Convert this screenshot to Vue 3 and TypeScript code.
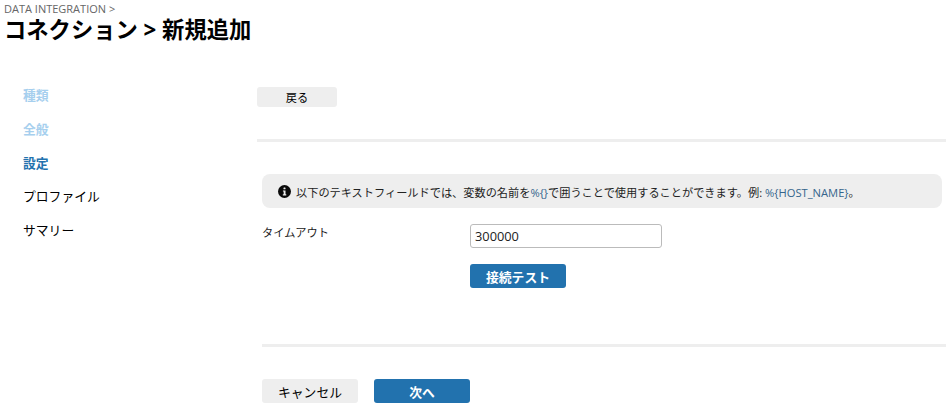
<script setup lang="ts">
const steps = [
  { label: '種類', state: 'done' },
  { label: '全般', state: 'done' },
  { label: '設定', state: 'active' },
  { label: 'プロファイル', state: '' },
  { label: 'サマリー', state: '' },
]
</script>

<template>
  <div class="page">
    <header class="page-header">
      <div class="crumb">DATA INTEGRATION &gt;</div>
      <h1>コネクション &gt; 新規追加</h1>
    </header>
    <div class="layout">
      <nav class="steps">
        <div v-for="s in steps" :key="s.label" class="step" :class="s.state">{{ s.label }}</div>
      </nav>
      <main class="content">
        <div class="back-row">
          <button class="btn btn-back">戻る</button>
        </div>
        <div class="rule"></div>
        <div class="form-area">
          <div class="notice">
            <svg class="info" width="13" height="13" viewBox="0 0 14 14">
              <circle cx="7" cy="7" r="7" fill="#0a0a0a" />
              <rect x="5.9" y="2.6" width="2.2" height="2.1" rx="0.5" fill="#eee" />
              <path d="M5.3 5.9h2.8v4.1h0.8v1.2H5.2V10h0.9V7.1h-0.8z" fill="#eee" />
            </svg>
            <span>以下のテキストフィールドでは、変数の名前を<span class="var">%{}</span>で囲うことで使用することができます。例: <span class="var">%{HOST_NAME}</span>。</span>
          </div>
          <div class="field">
            <label class="field-label">タイムアウト</label>
            <div class="field-body">
              <input class="text-input" type="text" value="300000" />
              <button class="btn btn-primary btn-test">接続テスト</button>
            </div>
          </div>
          <div class="rule bottom-rule"></div>
          <div class="actions">
            <button class="btn btn-cancel">キャンセル</button>
            <button class="btn btn-primary btn-next">次へ</button>
          </div>
        </div>
      </main>
    </div>
  </div>
</template>

<style>
html,
body {
  margin: 0;
  background: #fff;
  overflow: hidden;
}
</style>

<style scoped>
.page {
  width: 946px;
  height: 410px;
  overflow: hidden;
  font-family: "Open Sans", "Noto Sans CJK JP", sans-serif;
  color: #000;
}
.page-header {
  padding: 2px 0 0 4px;
}
.crumb {
  font-size: 11px;
  line-height: 13px;
  color: #666;
}
h1 {
  margin: 0;
  font-size: 22.3px;
  line-height: 30px;
  font-weight: 700;
}
.layout {
  display: flex;
  margin-top: 34px;
}
.steps {
  width: 257px;
  flex: none;
  padding: 4.3px 0 0 23px;
  box-sizing: border-box;
}
.step {
  height: 33.7px;
  line-height: 24px;
  font-size: 12.8px;
}
.step.done {
  color: #a6cfee;
  font-weight: 700;
}
.step.active {
  color: #2272ae;
  font-weight: 700;
}
.content {
  flex: 1;
  min-width: 0;
  padding-top: 6px;
}
.back-row {
  height: 52px;
}
.btn {
  display: block;
  border: 0;
  padding: 0;
  border-radius: 3px;
  font-family: inherit;
  box-sizing: border-box;
}
.btn-back {
  margin-top: 2px;
  width: 80px;
  height: 20px;
  background: #eee;
  font-size: 11.2px;
  color: #000;
}
.rule {
  height: 3px;
  background: #eee;
}
.form-area {
  padding: 32px 0 0 5px;
}
.notice {
  width: 680px;
  height: 34px;
  box-sizing: border-box;
  display: flex;
  align-items: center;
  gap: 5px;
  padding: 1px 0 0 16px;
  background: #eee;
  border-radius: 8px;
  font-size: 11.2px;
  color: #222;
}
.info {
  flex: none;
}
.var {
  color: #35658c;
}
.field {
  display: flex;
  margin-top: 16px;
}
.field-label {
  width: 208px;
  flex: none;
  font-size: 11.2px;
  line-height: 18px;
  color: #222;
}
.text-input {
  display: block;
  width: 192px;
  height: 24px;
  box-sizing: border-box;
  border: 1px solid #bbb;
  border-radius: 3px;
  padding: 0 4px;
  font-family: inherit;
  font-size: 12.8px;
  color: #222;
  outline: none;
}
.btn-primary {
  background: #2272ae;
  color: #fff;
  font-weight: 700;
  font-size: 12.8px;
  width: 96px;
  height: 24px;
}
.btn-test {
  margin-top: 16px;
}
.bottom-rule {
  margin-top: 56px;
}
.actions {
  display: flex;
  gap: 16px;
  margin-top: 32px;
}
.btn-cancel {
  width: 96px;
  height: 24px;
  background: #eee;
  font-size: 12.8px;
  color: #000;
}
</style>
